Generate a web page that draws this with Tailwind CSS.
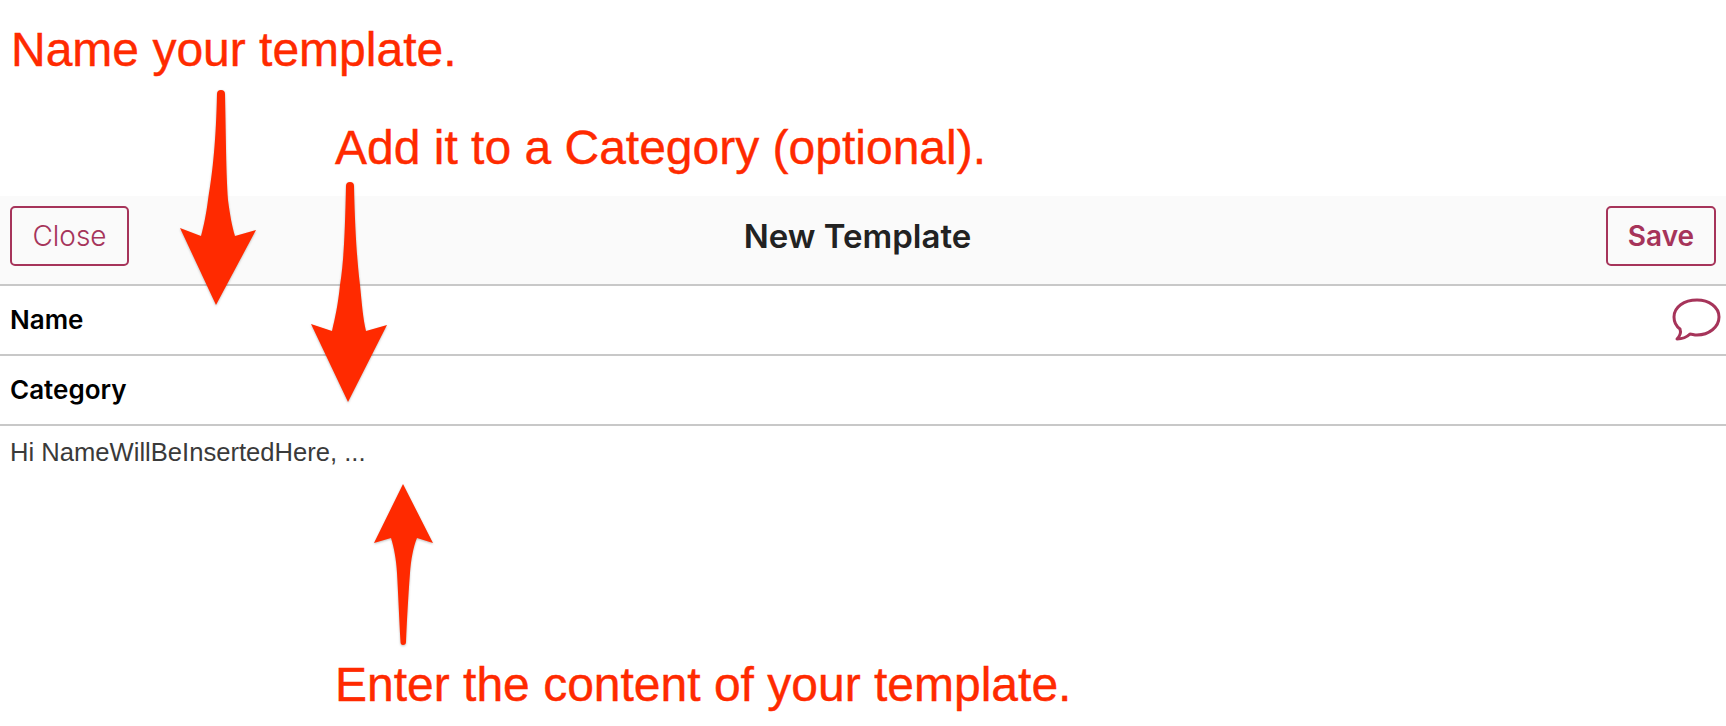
<!DOCTYPE html>
<html>
<head>
<script src="https://cdn.jsdelivr.net/npm/@tailwindcss/browser@4"></script>
</head>
<body class="bg-white">
<div class="relative w-[1726px] h-[726px] overflow-hidden bg-white font-['Inter',sans-serif]">
  <div class="h-[196px]"></div>
  <header class="h-[90px] bg-[#fafafa] border-b-2 border-[#c8c8c8] flex items-center justify-between pl-[10px] pr-[10px] pb-[8px]">
    <button class="w-[119px] h-[60px] rounded-[5px] border-2 border-[#a6345a] text-[#a6345a] text-[28px] font-light">Close</button>
    <h1 class="text-[33px] font-semibold text-[#222222] mr-[20px] translate-y-[1px]">New Template</h1>
    <button class="w-[110px] h-[60px] rounded-[5px] border-2 border-[#a6345a] text-[#a6345a] text-[28px] font-semibold">Save</button>
  </header>
  <div class="h-[70px] border-b-2 border-[#c8c8c8] flex items-center justify-between pl-[10px] pr-[5px]">
    <span class="text-[26px] font-semibold text-black -translate-y-[1px]">Name</span>
    <svg class="w-[50px] h-[44px]" viewBox="0 0 50 44" fill="none" stroke="#a6345a" stroke-width="3" stroke-linejoin="round"><path d="M26 2C13 2 3 9 3 19c0 5 2 9 6 12 1 3 0 7-3 10 4 0 9-1 13-5 2 0 4 1 7 1 12 0 22-8 22-18S38 2 26 2Z"/></svg>
  </div>
  <div class="h-[70px] border-b-2 border-[#c8c8c8] flex items-center pl-[10px]">
    <span class="text-[26px] font-semibold text-black -translate-y-[1px]">Category</span>
  </div>
  <p class="pl-[10px] pt-[11px] text-[25.6px] leading-[30px] text-[#3a3a3a] font-['Liberation_Sans',sans-serif]">Hi NameWillBeInsertedHere, ...</p>

  <div class="absolute left-[11px] top-[21px] text-[48px] leading-[58px] text-[#ff2a00] [-webkit-text-stroke:0.4px_#ff2a00] font-['Liberation_Sans',sans-serif] whitespace-nowrap">Name your template.</div>
  <div class="absolute left-[335px] top-[119px] text-[48px] leading-[58px] text-[#ff2a00] [-webkit-text-stroke:0.4px_#ff2a00] font-['Liberation_Sans',sans-serif] whitespace-nowrap">Add it to a Category (optional).</div>
  <div class="absolute left-[335px] top-[656px] text-[48px] leading-[58px] text-[#ff2a00] [-webkit-text-stroke:0.4px_#ff2a00] font-['Liberation_Sans',sans-serif] whitespace-nowrap">Enter the content of your template.</div>

  <svg class="absolute left-0 top-0 w-[1726px] h-[726px] pointer-events-none drop-shadow-[0_1px_1px_rgba(0,0,0,0.25)]" viewBox="0 0 1726 726" fill="#ff2a00">
    <path d="M217 94Q217 90 221 90Q225 90 225 94C226 140 226 170 228 200C230 215 232 226 235 236L256 230L216 305L180 228L201 236C204 225 206 215 208 200C213 170 216 140 217 94Z"/>
    <path d="M346 186Q346 182 350 182Q354 182 354 186C355 230 357 260 360 285C362 305 363 318 366 331L387 325L348 402L311 324L332 331C335 318 338 305 340 285C344 260 345 230 346 186Z"/>
    <path d="M400.500 642C399 615 398 590 397 573C396 558 394 548 391 538L374 543L403 484L433 543L417 538C413 548 411 560 410 573C408 600 407 620 406 642Q406 645 403 645Q400.500 645 400.500 642Z"/>
  </svg>
</div>
</body>
</html>
